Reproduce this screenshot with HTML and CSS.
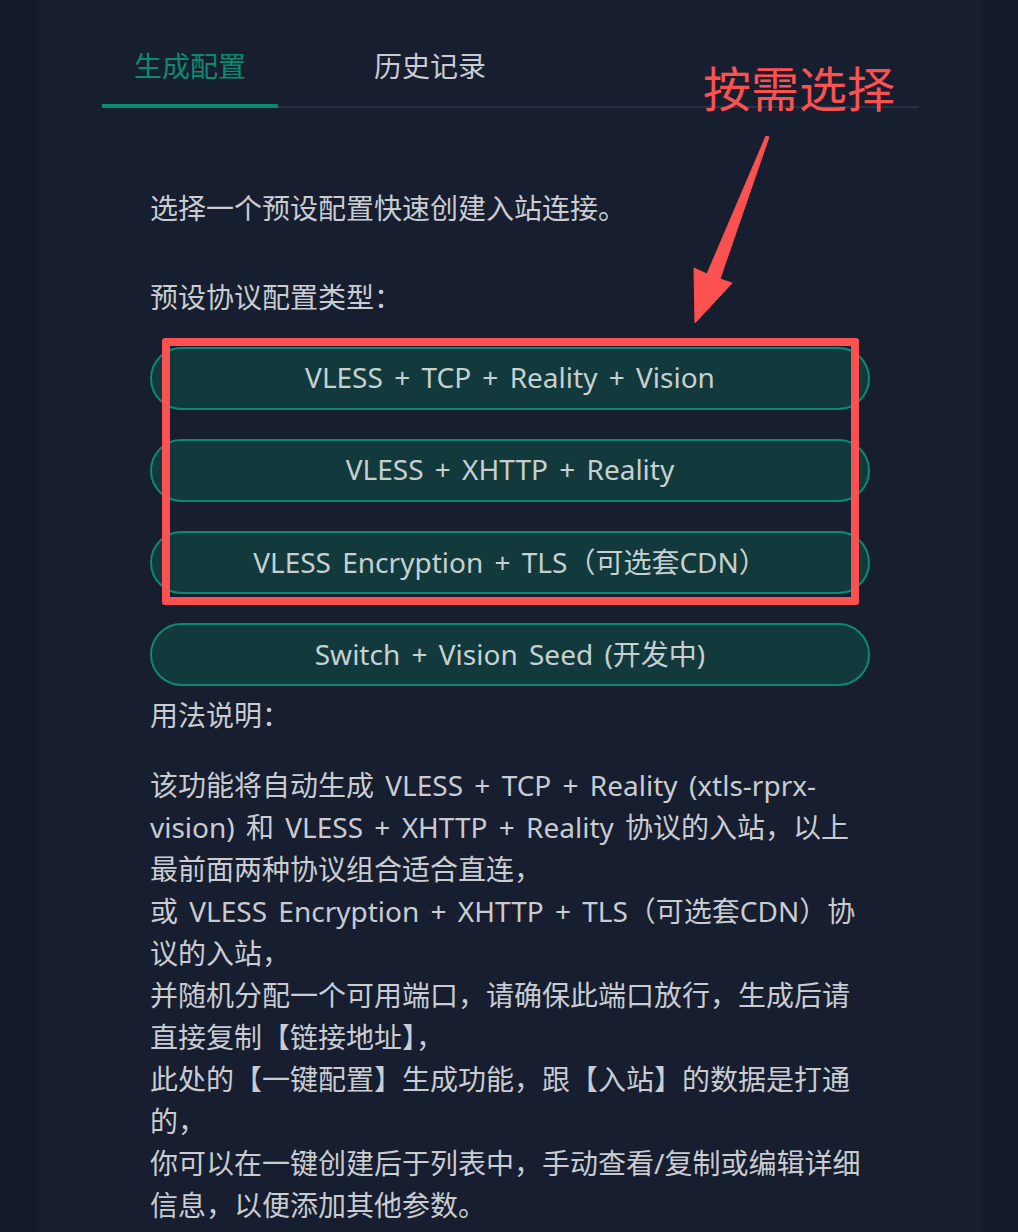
FILE: index.html
```html
<!DOCTYPE html>
<html lang="zh-CN">
<head>
<meta charset="utf-8">
<title>一键配置</title>
<link rel="stylesheet" href="styles.css">
</head>
<body>
<div class="page">
  <main class="panel">
    <nav class="tabs">
      <div class="tab active">生成配置</div>
      <div class="tab">历史记录</div>
    </nav>
    <section class="content">
      <p class="intro">选择一个预设配置快速创建入站连接。</p>
      <p class="label">预设协议配置类型：</p>
      <div class="buttons">
        <button class="preset">VLESS + TCP + Reality + Vision</button>
        <button class="preset">VLESS + XHTTP + Reality</button>
        <button class="preset">VLESS Encryption + TLS（可选套CDN）</button>
        <button class="preset">Switch + Vision Seed (开发中)</button>
      </div>
      <p class="usage-title">用法说明：</p>
      <p class="usage">该功能将自动生成 VLESS + TCP + Reality (xtls-rprx-<br>vision) 和 VLESS + XHTTP + Reality 协议的入站，以上<br>最前面两种协议组合适合直连，<br>或 VLESS Encryption + XHTTP + TLS（可选套CDN）协<br>议的入站，<br>并随机分配一个可用端口，请确保此端口放行，生成后请<br>直接复制【链接地址】，<br>此处的【一键配置】生成功能，跟【入站】的数据是打通<br>的，<br>你可以在一键创建后于列表中，手动查看/复制或编辑详细<br>信息，以便添加其他参数。</p>
    </section>
  </main>
</div>
<div class="note">按需选择</div>
<div class="highlight"></div>
<svg class="arrow" width="100" height="200" viewBox="680 130 100 200" xmlns="http://www.w3.org/2000/svg">
  <polygon points="766,136 769,137 720,279 732,283 695,323 694,268 707,274" fill="#fb5151" stroke="#fb5151" stroke-width="1" stroke-linejoin="round"/>
</svg>
</body>
</html>
```

FILE: styles.css
```css
* { box-sizing: border-box; }

html, body {
  margin: 0;
  padding: 0;
}

body {
  background: #121a29;
  font-family: "Noto Sans", "Noto Sans CJK SC", sans-serif;
  color: #c9ccd1;
  position: relative;
  min-height: 1232px;
}

.page {
  padding: 0 36px 0 38px;
}

.panel {
  background: #161e30;
  min-height: 1232px;
  padding: 45px 64px 0;
}

.tabs {
  display: flex;
  gap: 64px;
  border-bottom: 2px solid #283244;
}

.tab {
  font-size: 28px;
  line-height: 42px;
  padding: 0 32px 17px;
  margin-bottom: -2px;
  border-bottom: 4px solid transparent;
  color: #c9cbd0;
}

.tab.active {
  color: #0b8a70;
  border-bottom-color: #0b8a70;
}

.content {
  padding: 0 48px;
}

.content p {
  margin: 0;
  font-size: 28px;
  line-height: 42px;
  word-spacing: 4px;
}

.intro { margin-top: 79px !important; }
.label { margin-top: 47px !important; }

.buttons {
  display: flex;
  flex-direction: column;
  gap: 29px;
  margin-top: 29px;
}

.preset {
  height: 63px;
  border: 2px solid #0c8a71;
  border-radius: 32px;
  background: #123a3d;
  color: #c6d0d1;
  font-family: "Noto Sans", "Noto Sans CJK SC", sans-serif;
  font-size: 28px;
  word-spacing: 4px;
  padding: 0 0 3px;
}

.usage-title { margin-top: 8px !important; }
.usage {
  margin-top: 28px !important;
  white-space: nowrap;
}

.note {
  position: absolute;
  left: 703px;
  top: 62px;
  font-family: "Noto Sans CJK SC", sans-serif;
  font-size: 48px;
  line-height: 48px;
  color: #fb5151;
}

.highlight {
  position: absolute;
  left: 162px;
  top: 338px;
  width: 697px;
  height: 267px;
  border: 8px solid #fb5151;
  border-radius: 3px;
}

.arrow {
  position: absolute;
  left: 680px;
  top: 130px;
}
```
